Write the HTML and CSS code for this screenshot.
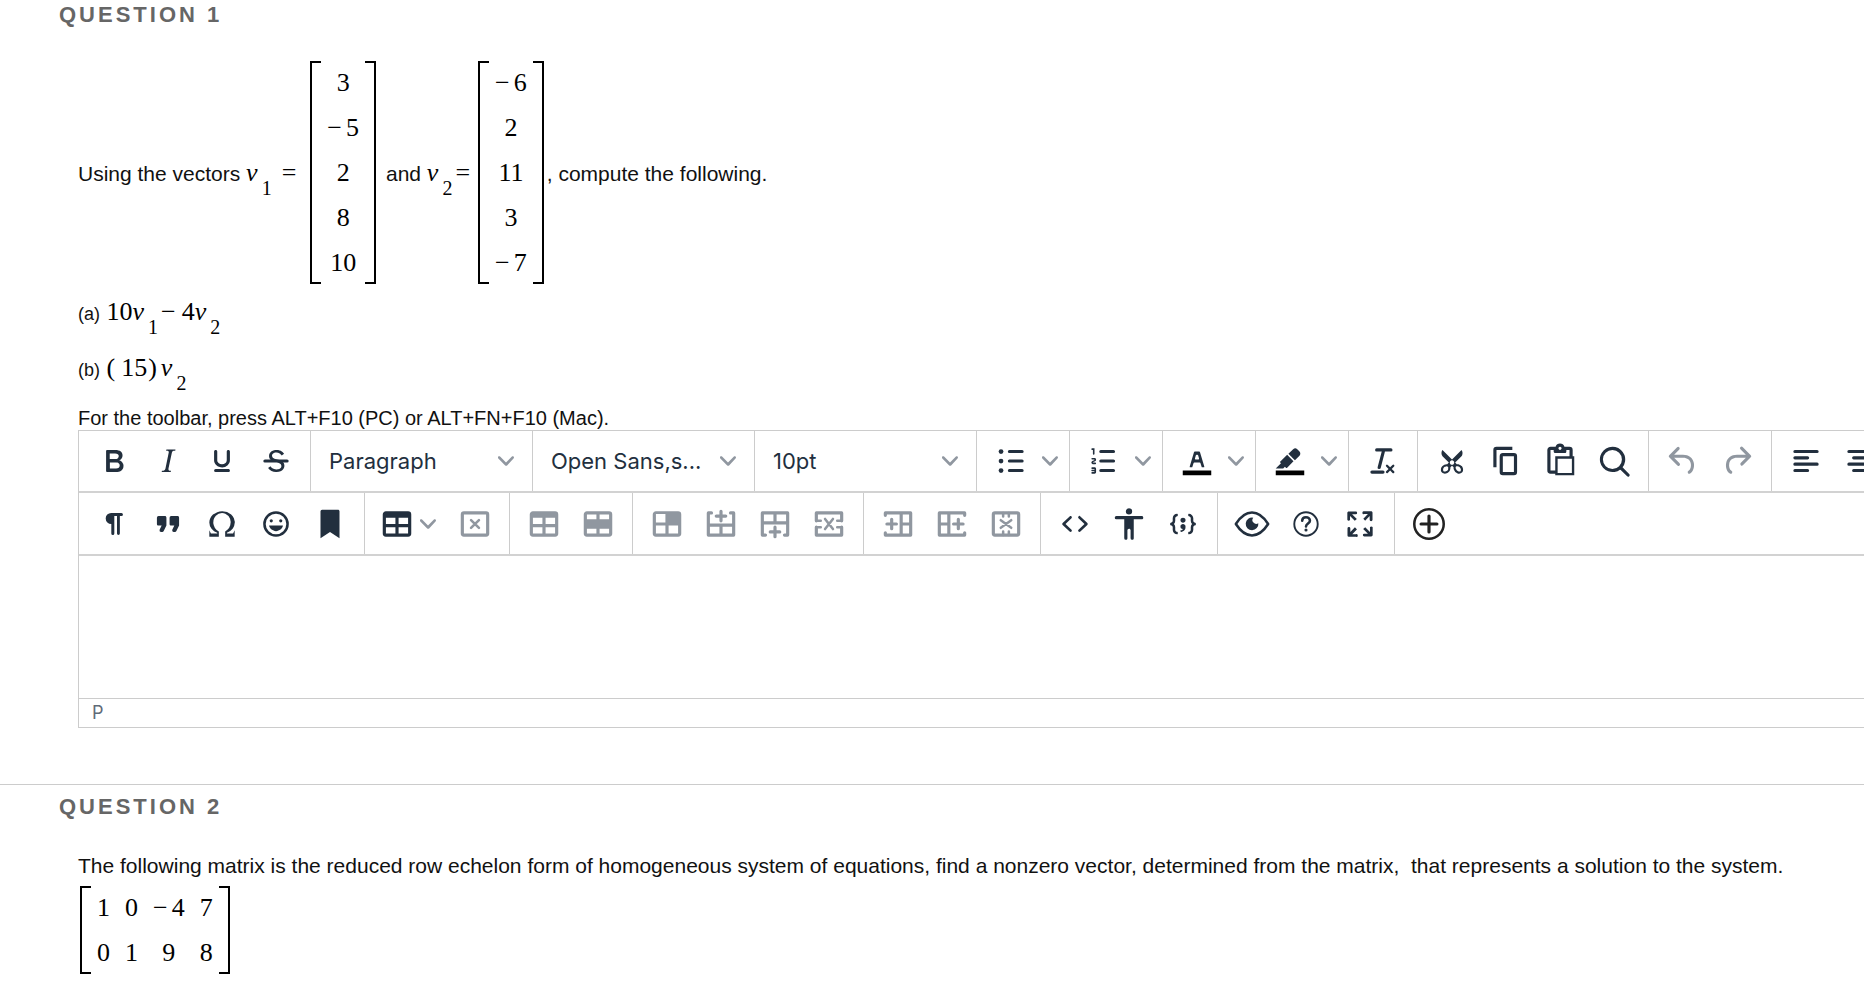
FILE: index.html
```html
<!DOCTYPE html>
<html lang="en">
<head>
<meta charset="utf-8">
<title>Linear algebra test</title>
<link rel="stylesheet" href="styles.css">
</head>
<body>
<svg class="symbols" aria-hidden="true">
  <symbol id="chevron" viewBox="0 0 10 10"><path d="M8.7 2.2c.3-.3.8-.3 1 0 .4.4.4.9 0 1.2L5.7 7.8c-.3.3-.9.3-1.2 0L.2 3.4a.8.8 0 010-1.2c.3-.3.8-.3 1.1 0L5 6l3.7-3.8z"/></symbol>
  <symbol id="table" viewBox="0 0 24 24"><path fill-rule="evenodd" d="M19 4a2 2 0 012 2v12a2 2 0 01-2 2H5a2 2 0 01-2-2V6c0-1.100.9-2 2-2h14zM5 14v4h6v-4H5zm14 0h-6v4h6v-4zm0-6h-6v4h6V8zM5 12h6V8H5v4z"/></symbol>
</svg>
<main>
<section class="question">
  <h2 class="question-title">QUESTION 1</h2>
  <div class="question-body">
    <div class="equation">
      <span class="run"><span class="prose">Using the vectors </span><i>v</i><sub>1</sub><span class="equals spaced">=</span></span>
      <span class="matrix"><span class="cells one"><span>3</span><span><span class="neg">−</span>5</span><span>2</span><span>8</span><span>10</span></span></span>
      <span class="run joined"><span class="prose">and </span><i>v</i><sub>2</sub><span class="equals">=</span></span>
      <span class="matrix"><span class="cells one"><span><span class="neg">−</span>6</span><span>2</span><span>11</span><span>3</span><span><span class="neg">−</span>7</span></span></span>
      <span class="run closing"><span class="prose">, compute the following.</span></span>
    </div>
    <p class="part"><span class="part-label">(a)</span> 10<i>v</i><sub>1</sub><span class="operator">−</span>4<i>v</i><sub>2</sub></p>
    <p class="part"><span class="part-label">(b)</span> (<span class="argument">15</span>)<i class="factor">v</i><sub>2</sub></p>
    <label class="hint" for="answer">For the toolbar, press ALT+F10 (PC) or ALT+FN+F10 (Mac).</label>
    <div class="editor">
      <div class="toolbar" role="toolbar" aria-label="Formatting">
        <div class="group">
          <button class="tool" aria-label="Bold"><svg class="icon" viewBox="0 0 24 24"><path d="M7.8 19c-.3 0-.5 0-.6-.2l-.2-.5V5.7c0-.2 0-.4.2-.5l.6-.2h5c1.5 0 2.7.3 3.5 1 .7.6 1.1 1.4 1.1 2.5a3 3 0 01-.6 1.9c-.4.6-1 1-1.6 1.2.4.1.9.3 1.3.6s.8.7 1 1.2c.4.4.5 1 .5 1.6 0 1.3-.4 2.3-1.3 3-.8.7-2.1 1-3.8 1H7.8zm5-8.3c.6 0 1.2-.1 1.6-.5.4-.3.6-.7.6-1.3 0-1.1-.8-1.7-2.3-1.7H9.3v3.5h3.4zm.5 6c.7 0 1.3-.1 1.7-.4.4-.4.6-.9.6-1.5s-.2-1-.7-1.4c-.4-.3-1-.4-2-.4H9.4v3.8h4z"/></svg></button>
          <button class="tool" aria-label="Italic"><svg class="icon" viewBox="0 0 24 24"><path d="M16.7 4.7l-.1.9h-.3c-.6 0-1 0-1.4.3-.3.3-.4.6-.5 1.1l-2.1 9.8v.6c0 .5.4.8 1.4.8h.2l-.2.8H8l.2-.8h.2c1.1 0 1.8-.5 2-1.5l2-9.8.1-.5c0-.6-.4-.8-1.4-.8h-.3l.2-.9h5.8z"/></svg></button>
          <button class="tool" aria-label="Underline"><svg class="icon" viewBox="0 0 24 24"><path d="M16 5c.6 0 1 .4 1 1v5.5a4 4 0 01-.4 1.8l-1 1.4a5.3 5.3 0 01-5.5 1 5 5 0 01-1.6-1c-.5-.4-.8-.9-1.1-1.4a4 4 0 01-.4-1.8V6c0-.6.4-1 1-1s1 .4 1 1v5.5c0 .3 0 .6.2 1l.6.7a3.3 3.3 0 002.2.8 3.4 3.4 0 002.2-.8c.3-.2.4-.5.6-.8l.2-.9V6c0-.6.4-1 1-1zM8 17h8c.6 0 1 .4 1 1s-.4 1-1 1H8a1 1 0 010-2z"/></svg></button>
          <button class="tool" aria-label="Strikethrough"><svg class="icon" viewBox="0 0 24 24"><path d="M15.6 8.5c-.5-.7-1-1.1-1.3-1.3-.6-.4-1.3-.6-2-.6-2.7 0-2.8 1.7-2.8 2.1 0 1.6 1.8 2 3.2 2.3 4.4.9 4.6 2.8 4.6 3.9 0 1.4-.7 4.1-5 4.1A6.2 6.2 0 017 16.4l1.5-1.1c.4.6 1.6 2 3.7 2 1.6 0 2.5-.4 3-1.2.4-.8.3-2-.8-2.6-.7-.4-1.6-.7-2.9-1-1-.2-3.9-.8-3.9-3.6C7.6 6 10.3 5 12.4 5c2.9 0 4.2 1.6 4.7 2.4l-1.5 1.1z"/><path d="M5 11h14a1 1 0 010 2H5a1 1 0 010-2z"/></svg></button>
        </div>
        <div class="group picker">
          <select class="choice" aria-label="Block format"><option>Paragraph</option></select>
          <svg class="chevron"><use href="#chevron"/></svg>
        </div>
        <div class="group picker">
          <select class="choice" aria-label="Font family"><option>Open Sans,s...</option></select>
          <svg class="chevron"><use href="#chevron"/></svg>
        </div>
        <div class="group picker">
          <select class="choice" aria-label="Font size"><option>10pt</option></select>
          <svg class="chevron"><use href="#chevron"/></svg>
        </div>
        <div class="group">
          <button class="tool" aria-label="Bullet list"><svg class="icon" viewBox="0 0 24 24"><path class="line" d="M11 6h8M11 12h8M11 18h8"/><circle cx="5.7" cy="6" r="1.5"/><circle cx="5.7" cy="12" r="1.5"/><circle cx="5.7" cy="18" r="1.5"/></svg></button>
          <button class="more" aria-label="Bullet list styles"><svg class="chevron"><use href="#chevron"/></svg></button>
        </div>
        <div class="group">
          <button class="tool" aria-label="Numbered list"><svg class="icon" viewBox="0 0 24 24"><path class="line" d="M10 6h8M10 12h8M10 18h8"/><path d="M6 4v3.500c0 .3-.2.5-.5.5a.5.5 0 01-.5-.5V5h-.5a.5.5 0 010-1H6zm-1 8.800l.2.2h1.300c.3 0 .5.2.5.5s-.2.5-.5.5H4.900a1 1 0 01-.9-1V13c0-.4.3-.8.6-1l1.200-.4.2-.3a.2.2 0 00-.2-.2H4.500a.5.5 0 01-.5-.5c0-.3.2-.5.5-.5h1.600c.5 0 .9.4.9 1v.1c0 .4-.3.8-.6 1l-1.200.4-.2.3zM7 17v2c0 .6-.4 1-1 1H4.500a.5.5 0 010-1h1.200c.2 0 .3-.1.3-.3 0-.2-.1-.3-.3-.3H4.400a.4.4 0 110-.8h1.300c.2 0 .3-.1.3-.3 0-.2-.1-.3-.3-.3H4.500a.5.5 0 110-1H6c.6 0 1 .4 1 1z"/></svg></button>
          <button class="more" aria-label="Numbered list styles"><svg class="chevron"><use href="#chevron"/></svg></button>
        </div>
        <div class="group">
          <button class="tool" aria-label="Text color"><svg class="icon" viewBox="0 0 24 24"><path class="swatch" d="M3 18h18v3H3z"/><path fill-rule="evenodd" d="M8.700 16h-.8a.5.5 0 01-.5-.6l2.700-9c.1-.3.3-.4.5-.4h2.800c.2 0 .4.1.5.4l2.700 9a.5.5 0 01-.5.6h-.8a.5.5 0 01-.4-.4l-.7-2.200c0-.3-.3-.4-.5-.4h-3.400c-.2 0-.4.1-.5.4l-.7 2.200c0 .3-.2.4-.4.4zm2.600-7.600l-.6 2a.5.5 0 00.5.6h1.600a.5.5 0 00.5-.6l-.6-2c0-.3-.3-.4-.5-.4h-.4c-.2 0-.4.1-.5.4z"/></svg></button>
          <button class="more" aria-label="Text colors"><svg class="chevron"><use href="#chevron"/></svg></button>
        </div>
        <div class="group">
          <button class="tool" aria-label="Highlight color"><svg class="icon" viewBox="0 0 24 24"><path class="swatch" d="M3 18h18v3H3z"/><path d="M7.700 16.700H3l3.300-3.300-.7-.8L10.200 8l4 4.100-4 4.200c-.2.2-.6.2-.8 0l-.6-.7-1.100 1.100zm5-7.500L11 7.400l3-2.900a2 2 0 012.600 0L18 6c.7.7.7 2 0 2.700l-2.900 2.900-1.800-1.800-.5-.6"/></svg></button>
          <button class="more" aria-label="Highlight colors"><svg class="chevron"><use href="#chevron"/></svg></button>
        </div>
        <div class="group">
          <button class="tool" aria-label="Clear formatting"><svg class="icon" viewBox="0 0 24 24"><path d="M13.200 6a1 1 0 010 .2l-2.600 10a1 1 0 01-1 .8h-.2a.8.8 0 01-.8-1l2.600-10H8a1 1 0 110-2h9a1 1 0 010 2h-3.800zM5 18h7a1 1 0 010 2H5a1 1 0 010-2zm13 1.500L16.500 18 15 19.500a.7.7 0 01-1-1l1.500-1.500-1.500-1.500a.7.7 0 011-1l1.500 1.500 1.500-1.500a.7.7 0 011 1L17.500 17l1.500 1.500a.7.7 0 01-1 1z"/></svg></button>
        </div>
        <div class="group">
          <button class="tool" aria-label="Cut"><svg class="icon" viewBox="0 0 24 24"><path fill-rule="evenodd" d="M18 15c.6.7 1 1.400 1 2.300 0 .8-.2 1.500-.7 2l-.8.5-1 .2c-.4 0-.8 0-1.200-.3a3.900 3.900 0 01-2.100-2.200c-.2-.5-.3-1-.2-1.500l-1-1-1 1c0 .5 0 1-.2 1.500-.1.5-.4 1-.9 1.400-.3.4-.7.6-1.200.8l-1.200.3c-.4 0-.7 0-1-.2-.3 0-.6-.3-.8-.5-.5-.5-.8-1.200-.7-2 0-.9.4-1.600 1-2.200A3.700 3.700 0 018.600 14H9l1-1-4-4-.5-1a3.300 3.300 0 010-2c0-.4.3-.7.5-1l6 6 6-6 .5 1a3.300 3.300 0 010 2c0 .4-.3.7-.5 1l-4 4 1 1h.5c.4 0 .8 0 1.200.3.5.2.9.4 1.200.8zm-8.500 2.200l.1-.4v-.7a1 1 0 00-.2-.5 1 1 0 00-.4-.2 1.600 1.600 0 00-.8 0 2.600 2.600 0 00-.8.3 2.500 2.500 0 00-.9 1.100l-.1.4v.7l.2.5.5.2h.7a2.500 2.500 0 00.8-.3 2.800 2.800 0 001-1zm2.500-2.800c.4 0 .7-.1 1-.4.3-.3.4-.6.4-1s-.1-.7-.4-1c-.3-.3-.6-.4-1-.4s-.7.1-1 .4c-.3.3-.4.6-.4 1s.1.7.4 1c.3.3.6.4 1 .4zm5.400 4l.2-.5v-.7l-.2-.4a2.600 2.600 0 00-.9-1.200 2.400 2.400 0 00-.8-.3 1.600 1.600 0 00-.8 0 1 1 0 00-.4.2 1 1 0 00-.2.9 2.800 2.800 0 00.2.7 2.600 2.600 0 001.700 1.600h.7c.2 0 .4-.1.5-.3z"/></svg></button>
          <button class="tool" aria-label="Copy"><svg class="icon" viewBox="0 0 24 24"><path fill-rule="evenodd" d="M16 3H6a2 2 0 00-2 2v11h2V5h10V3zm1 4a2 2 0 012 2v10a2 2 0 01-2 2h-7a2 2 0 01-2-2V9c0-1.200.9-2 2-2h7zm0 12V9h-7v10h7z"/></svg></button>
          <button class="tool" aria-label="Paste"><svg class="icon" viewBox="0 0 24 24"><path fill-rule="evenodd" d="M18 9V5h-2v1c0 .6-.4 1-1 1H9a1 1 0 01-1-1V5H6v13h3V9h9zM9 20H6a2 2 0 01-2-2V5c0-1.100.9-2 2-2h3.200A3 3 0 0112 1a3 3 0 012.800 2H18a2 2 0 012 2v4h1v12H9v-1zm1.500-9.500v9h9v-9h-9zM12 3a1 1 0 00-1 1c0 .5.4 1 1 1s1-.5 1-1-.4-1-1-1z"/></svg></button>
          <button class="tool" aria-label="Find and replace"><svg class="icon" viewBox="0 0 24 24"><path fill-rule="evenodd" d="M16 17.300a8 8 0 111.400-1.400l4.300 4.400a1 1 0 01-1.400 1.400l-4.400-4.300zm-5-.3a6 6 0 100-12 6 6 0 000 12z"/></svg></button>
        </div>
        <div class="group">
          <button class="tool" disabled aria-label="Undo"><svg class="icon" viewBox="0 0 24 24"><path d="M6.400 8H12c3.700 0 6.200 2 6.800 5.100.6 2.700-.4 5.600-2.300 6.800a1 1 0 01-1-1.800c1.100-.6 1.800-2.700 1.400-4.600-.5-2.100-2.100-3.500-4.900-3.500H6.400l3.300 3.300a1 1 0 11-1.400 1.400l-5-5a1 1 0 010-1.400l5-5a1 1 0 011.400 1.400L6.400 8z"/></svg></button>
          <button class="tool" disabled aria-label="Redo"><svg class="icon" viewBox="0 0 24 24"><path d="M17.600 10H12c-2.800 0-4.400 1.400-4.900 3.500-.4 2 .3 4 1.400 4.600a1 1 0 11-1 1.800c-2-1.200-2.900-4.100-2.300-6.800.6-3 3-5.100 6.800-5.100h5.600l-3.300-3.300a1 1 0 111.400-1.400l5 5a1 1 0 010 1.400l-5 5a1 1 0 01-1.400-1.400l3.300-3.300z"/></svg></button>
        </div>
        <div class="group">
          <button class="tool" aria-label="Align left"><svg class="icon" viewBox="0 0 24 24"><path class="line" d="M5 6h14M5 10h8M5 14h14M5 18h8"/></svg></button>
          <button class="tool" aria-label="Align center"><svg class="icon" viewBox="0 0 24 24"><path class="line" d="M5 6h14M8 10h8M5 14h14M8 18h8"/></svg></button>
        </div>
      </div>
      <div class="toolbar" role="toolbar" aria-label="Insert and table">
        <div class="group">
          <button class="tool" aria-label="Show invisible characters"><svg class="icon" viewBox="0 0 24 24"><path d="M10.200 5h6.500a.9.9 0 010 1.900h-1V18a.9.9 0 01-1.800 0V6.900h-1.700V18a.9.9 0 01-1.900 0v-6a3.500 3.500 0 01-.1-7z"/></svg></button>
          <button class="tool" aria-label="Blockquote"><svg class="icon" viewBox="0 0 24 24"><path d="M7.500 17h.9c.4 0 .7-.2.9-.6L11 13V8c0-.6-.4-1-1-1H6a1 1 0 00-1 1v4c0 .6.4 1 1 1h2l-1.300 2.700a1 1 0 00.8 1.300zm8 0h.9c.4 0 .7-.2.9-.6L19 13V8c0-.6-.4-1-1-1h-4a1 1 0 00-1 1v4c0 .6.4 1 1 1h2l-1.300 2.700a1 1 0 00.8 1.300z"/></svg></button>
          <button class="tool" aria-label="Special character"><svg class="icon" viewBox="0 0 24 24"><path d="M15 18h4l1-2v4h-6v-3.300l1.400-1a6 6 0 001.800-2.900 6.300 6.300 0 00-.1-4.100 5.800 5.800 0 00-3-3.200c-.6-.3-1.300-.5-2.100-.5a5.100 5.100 0 00-3.900 1.800 6.300 6.300 0 00-1.300 6 6.200 6.200 0 001.800 3l1.400.9V20H4v-4l1 2h4v-.5l-2-1L5.400 15A6.500 6.500 0 014 11c0-1 .2-1.900.6-2.700A7 7 0 016.300 6C7.100 5.400 8 5 9 4.500c1-.3 2-.5 3.100-.5a8.800 8.800 0 015.700 2 7 7 0 011.700 2.300 6 6 0 01.2 4.800c-.2.7-.6 1.300-1 1.900a7.600 7.600 0 01-3.600 2.500v.5z"/></svg></button>
          <button class="tool" aria-label="Emoji"><svg class="icon" viewBox="0 0 24 24"><circle class="thin" cx="12" cy="12" r="7.300"/><circle cx="9" cy="10" r="1"/><circle cx="15" cy="10" r="1"/><path d="M12 16.500c2.100 0 4-1.500 4.400-3.500H7.600c.5 2 2.300 3.500 4.400 3.500z"/></svg></button>
          <button class="tool" aria-label="Anchor"><svg class="icon" viewBox="0 0 24 24"><path d="M6 4v17l6-4 6 4V4c0-.6-.4-1-1-1H7a1 1 0 00-1 1z"/></svg></button>
        </div>
        <div class="group">
          <button class="tool menu" aria-label="Table"><svg class="icon"><use href="#table"/></svg><svg class="chevron"><use href="#chevron"/></svg></button>
          <button class="tool" disabled aria-label="Delete table"><svg class="icon" viewBox="0 0 24 24"><rect class="line" x="4" y="5" width="16" height="14" rx="1"/><path class="thin" d="M9.500 9.500l5 5M14.500 9.500l-5 5"/></svg></button>
        </div>
        <div class="group">
          <button class="tool" disabled aria-label="Table header"><svg class="icon"><use href="#table"/></svg></button>
          <button class="tool" disabled aria-label="Row properties"><svg class="icon" viewBox="0 0 24 24"><path fill-rule="evenodd" d="M19 4a2 2 0 012 2v12a2 2 0 01-2 2H5a2 2 0 01-2-2V6c0-1.100.9-2 2-2h14zM5 6v3h6V6H5zm8 0v3h6V6h-6zM5 15v3h6v-3H5zm8 0v3h6v-3h-6z"/></svg></button>
        </div>
        <div class="group">
          <button class="tool" disabled aria-label="Cell properties"><svg class="icon" viewBox="0 0 24 24"><path fill-rule="evenodd" d="M19 4a2 2 0 012 2v12a2 2 0 01-2 2H5a2 2 0 01-2-2V6c0-1.100.9-2 2-2h14zM5 5.700V11h6V5.700H5zM5 13v5h6v-5H5zm8 0v5h6v-5h-6z"/></svg></button>
          <button class="tool" disabled aria-label="Insert row above"><svg class="icon" viewBox="0 0 24 24"><path class="line" d="M6 5H4v14h16V5h-2M4 12.700h16M12 13v6M12 4v6M9 7h6"/></svg></button>
          <button class="tool" disabled aria-label="Insert row below"><svg class="icon" viewBox="0 0 24 24"><path class="line" d="M6 19H4V5h16v14h-2M4 11.300h16M12 11V5M12 14v6M9 17h6"/></svg></button>
          <button class="tool" disabled aria-label="Delete row"><svg class="icon" viewBox="0 0 24 24"><path class="line" d="M4 10V5h16v5M4 14v5h16v-5"/><path class="thin" d="M4 10h2.800M4 14h2.800M17.200 10H20M17.200 14H20M9.500 8.800l5 6.400M14.500 8.800l-5 6.400"/></svg></button>
        </div>
        <div class="group">
          <button class="tool" disabled aria-label="Insert column before"><svg class="icon" viewBox="0 0 24 24"><path class="line" d="M4 6.500V5h16v14H4v-1.500M14 5v14M14 12h6M8 9v6M5 12h6"/></svg></button>
          <button class="tool" disabled aria-label="Insert column after"><svg class="icon" viewBox="0 0 24 24"><path class="line" d="M20 6.500V5H4v14h16v-1.500M10 5v14M4 12h6M16 9v6M13 12h6"/></svg></button>
          <button class="tool" disabled aria-label="Delete column"><svg class="icon" viewBox="0 0 24 24"><rect class="line" x="4" y="5" width="16" height="14" rx="1"/><path class="thin" d="M10.200 5v2.300M13.800 5v2.300M10.200 16.700V19M13.800 16.700V19M8.700 9.600l6.600 4.800M15.300 9.600l-6.600 4.800"/></svg></button>
        </div>
        <div class="group">
          <button class="tool" aria-label="Source code"><svg class="icon" viewBox="0 0 24 24"><path d="M9.800 15.700c.3.3.3.8 0 1-.3.4-.9.4-1.200 0l-4.400-4.100a.8.8 0 010-1.200l4.400-4.200c.3-.3.9-.3 1.200 0 .3.3.3.8 0 1.100L6 12l3.800 3.700zM14.200 15.700c-.3.3-.3.8 0 1 .4.4.9.4 1.200 0l4.400-4.100c.3-.3.3-.9 0-1.200l-4.400-4.200a.8.8 0 00-1.200 0c-.3.3-.3.8 0 1.100L18 12l-3.800 3.700z"/></svg></button>
          <button class="tool" aria-label="Accessibility checker"><svg class="icon" viewBox="0 0 24 24"><path d="M12 2a2 2 0 012 2 2 2 0 01-2 2 2 2 0 01-2-2c0-1.100.9-2 2-2zm8 7h-5v12c0 .6-.4 1-1 1a1 1 0 01-1-1v-5c0-.6-.4-1-1-1a1 1 0 00-1 1v5c0 .6-.4 1-1 1a1 1 0 01-1-1V9H4a1 1 0 110-2h16c.6 0 1 .4 1 1s-.4 1-1 1z"/></svg></button>
          <button class="tool" aria-label="Code sample"><svg class="icon" viewBox="0 1 24 24"><path d="M7.100 11a2.800 2.800 0 01-.8 2 2.800 2.800 0 01.8 2v1.700c0 .3.1.6.4.8.2.3.5.4.8.4.3 0 .4.2.4.4v.8c0 .2-.1.4-.4.4-.7 0-1.400-.3-2-.8-.5-.6-.8-1.300-.8-2V15c0-.3-.1-.6-.4-.8-.2-.3-.5-.4-.8-.4a.4.4 0 01-.4-.4v-.8c0-.2.2-.4.4-.4.3 0 .6-.1.8-.4.3-.2.4-.5.4-.8V9.300c0-.7.3-1.400.8-2 .6-.5 1.300-.8 2-.8.3 0 .4.2.4.4v.8c0 .2-.1.4-.4.4-.3 0-.6.1-.8.4-.3.2-.4.5-.4.8V11zm9.800 0V9.300c0-.3-.1-.6-.4-.8-.2-.3-.5-.4-.8-.4a.4.4 0 01-.4-.4V7c0-.2.1-.4.4-.4.7 0 1.400.3 2 .8.5.6.8 1.300.8 2V11c0 .3.1.6.4.8.2.3.5.4.8.4.2 0 .4.2.4.4v.8c0 .2-.2.4-.4.4-.3 0-.6.1-.8.4-.3.2-.4.5-.4.8v1.700c0 .7-.3 1.400-.8 2-.6.5-1.300.8-2 .8a.4.4 0 01-.4-.4v-.8c0-.2.1-.4.4-.4.3 0 .6-.1.8-.4.3-.2.4-.5.4-.8V15a2.800 2.800 0 01.8-2 2.800 2.800 0 01-.8-2zm-3.300-.4c0 .4-.1.8-.5 1.100-.3.3-.7.5-1.100.5-.4 0-.8-.2-1.100-.5-.4-.3-.5-.7-.5-1.100 0-.5.1-.9.5-1.200.3-.3.7-.4 1.100-.4.4 0 .8.1 1.100.4.4.3.5.7.5 1.200zM12 13c.4 0 .8.1 1.100.5.4.3.5.7.5 1.100 0 1-.1 1.600-.5 2a3 3 0 01-1.100 1c-.4.3-.8.4-1.100.4a.5.5 0 01-.5-.5V17a3 3 0 001-.2l.6-.6c-.6 0-1-.2-1.300-.5-.2-.3-.3-.7-.3-1 0-.5.1-1 .5-1.200.3-.4.7-.5 1.100-.5z"/></svg></button>
        </div>
        <div class="group">
          <button class="tool" aria-label="Preview"><svg class="icon" viewBox="0 0 24 24"><path class="thin" d="M1.800 12C5 7 8.300 4.800 12 4.800S19 7 22.200 12C19 17 15.700 19.200 12 19.200S5 17 1.800 12z"/><path d="M12.800 8a4 4 0 103.200 3.500 2.400 2.400 0 01-3.200-3.500z"/></svg></button>
          <button class="tool" aria-label="Help"><svg class="icon" viewBox="0 0 24 24"><circle class="fine" cx="12" cy="12" r="7.400"/><path class="thin" d="M9.600 10c0-1.300 1-2.200 2.400-2.200s2.500.9 2.500 2.100c0 1.700-2.500 1.900-2.500 3.700"/><circle cx="12" cy="15.800" r="1"/></svg></button>
          <button class="tool" aria-label="Fullscreen"><svg class="icon" viewBox="0 0 24 24"><path d="M15.300 10l-1.200-1.300 2.900-3h-2.300a.9.9 0 110-1.700H19c.5 0 .9.4.9.9v4.400a.9.9 0 11-1.800 0V7l-2.900 3zm0 4l3 3v-2.300a.9.9 0 111.700 0V19c0 .5-.4.9-.9.9h-4.400a.9.9 0 110-1.800H17l-3-2.900 1.300-1.200zM10 15.400l-2.900 3h2.300a.9.9 0 110 1.700H5a.9.9 0 01-.9-.9v-4.400a.9.9 0 111.800 0V17l2.900-3 1.200 1.300zM8.700 10L5.700 7v2.300a.9.9 0 01-1.700 0V5c0-.5.4-.9.9-.9h4.400a.9.9 0 010 1.800H7l3 2.900-1.300 1.200z"/></svg></button>
        </div>
        <div class="group">
          <button class="tool add" aria-label="Add content"><svg class="icon" viewBox="0 0 24 24"><circle class="thin" cx="12" cy="12" r="9.300"/><path class="line" d="M12 7v10M7 12h10"/></svg></button>
        </div>
      </div>
      <textarea class="answer" id="answer"></textarea>
      <div class="status">P</div>
    </div>
  </div>
</section>
<section class="question">
  <h2 class="question-title">QUESTION 2</h2>
  <div class="question-body">
    <p class="statement">The following matrix is the reduced row echelon form of homogeneous system of equations, find a nonzero vector, determined from the matrix, &nbsp;that represents a solution to the system.</p>
    <div class="equation inset">
      <span class="matrix"><span class="cells four"><span>1</span><span>0</span><span><span class="neg">−</span>4</span><span>7</span><span>0</span><span>1</span><span>9</span><span>8</span></span></span>
    </div>
  </div>
</section>
</main>
</body>
</html>
```

FILE: styles.css
```css
* { box-sizing: border-box; }

body {
  margin: 0;
  background: #fff;
  color: #111;
  font-family: "Liberation Sans", Arial, sans-serif;
  font-size: 21px;
  overflow-x: hidden;
}

p { margin: 0; }

.symbols { display: none; }

.question + .question {
  margin-top: 56px;
  padding-top: 7px;
  border-top: 1px solid #ccc;
}

.question-title {
  margin: 0 0 0 59px;
  color: #666;
  font-size: 22px;
  font-weight: bold;
  line-height: 30px;
  letter-spacing: 3px;
}

.question-body { padding: 29px 0 0 78px; }

/* Mathematics */
.equation {
  display: flex;
  align-items: center;
  margin-top: 2px;
}

.inset { margin: 5px 0 0 2px; }

.run,
.matrix,
.part {
  color: #000;
  font-family: "Liberation Serif", "Times New Roman", serif;
  font-size: 26px;
  line-height: 33px;
  white-space: pre;
}

.prose {
  color: #111;
  font-family: "Liberation Sans", Arial, sans-serif;
  font-size: 21px;
  line-height: 1;
}

.joined { margin-left: 10px; }
.closing { margin-left: 3px; }

sub {
  margin-left: 4px;
  font-size: 20px;
  line-height: 0;
  vertical-align: -14px;
}

.equals { margin: 0 8px 0 3px; }
.equals.spaced { margin: 0 14px 0 10px; }
.operator { margin: 0 6px 0 3px; }
.neg { margin-right: 4px; }
.argument { margin: 0 1px 0 6px; }
.factor { margin-left: 4px; }

.matrix { display: flex; }

.matrix::before,
.matrix::after {
  content: "";
  width: 9px;
  border: 2px solid #000;
}

.matrix::before { border-right: 0; }
.matrix::after { border-left: 0; }

.cells {
  display: grid;
  gap: 12px 15px;
  padding: 5px 6px;
  text-align: center;
}

.four { grid-template-columns: repeat(4, auto); }

.part { margin-top: 23px; }
.equation + .part { margin-top: 11px; }

.part-label {
  color: #111;
  font-family: "Liberation Sans", Arial, sans-serif;
  font-size: 18px;
  line-height: 1;
}

.hint {
  display: block;
  margin-top: 22px;
  font-size: 20px;
  line-height: 24px;
}

.statement { line-height: 30px; }

/* Editor */
.editor {
  overflow: hidden;
  border: solid #ccc;
  border-width: 0 0 1px 1px;
}

.toolbar {
  display: flex;
  height: 63px;
  padding-left: 1px;
  border-bottom: 2px solid #d2d2d2;
}

.toolbar:first-child { border-top: 1px solid #ccc; }

.group {
  display: flex;
  flex: none;
  align-items: center;
  padding: 0 7px;
  border-right: 1px solid #ccc;
}

.group:last-child { border-right: 0; }

.tool,
.more {
  display: flex;
  align-items: center;
  justify-content: center;
  width: 54px;
  height: 54px;
  padding: 0;
  border: 0;
  background: none;
  color: #222f3e;
}

.tool:disabled { color: #9097a0; }
.tool.menu { width: 76px; gap: 4px; padding-right: 6px; }
.tool.add { color: #222; }
.more { width: 24px; }

.icon {
  flex: none;
  width: 38px;
  height: 38px;
  fill: currentColor;
}

.line,
.thin,
.fine {
  fill: none;
  stroke: currentColor;
  stroke-width: 2;
  stroke-linecap: round;
  stroke-linejoin: round;
}

.thin { stroke-width: 1.6; }
.fine { stroke-width: 1.2; }
.swatch { fill: #000; }

.chevron {
  flex: none;
  width: 16px;
  height: 16px;
  fill: #9097a0;
}

.picker {
  display: grid;
  width: 222px;
  padding: 0;
}

.picker > * { grid-area: 1 / 1; }

.picker .chevron {
  justify-self: end;
  margin-right: 18px;
  pointer-events: none;
}

.choice {
  width: 100%;
  height: 54px;
  padding: 0 36px 0 18px;
  border: 0;
  background: none;
  color: #222f3e;
  font: 22px Inter, sans-serif;
  appearance: none;
}

.answer {
  display: block;
  width: 100%;
  height: 142px;
  padding: 16px;
  border: 0;
  outline: 0;
  resize: none;
  font: 21px "Open Sans", sans-serif;
}

.status {
  padding: 0 13px;
  border-top: 1px solid #ccc;
  color: #5f6b78;
  font: 18px/28px Inter, sans-serif;
}
```
